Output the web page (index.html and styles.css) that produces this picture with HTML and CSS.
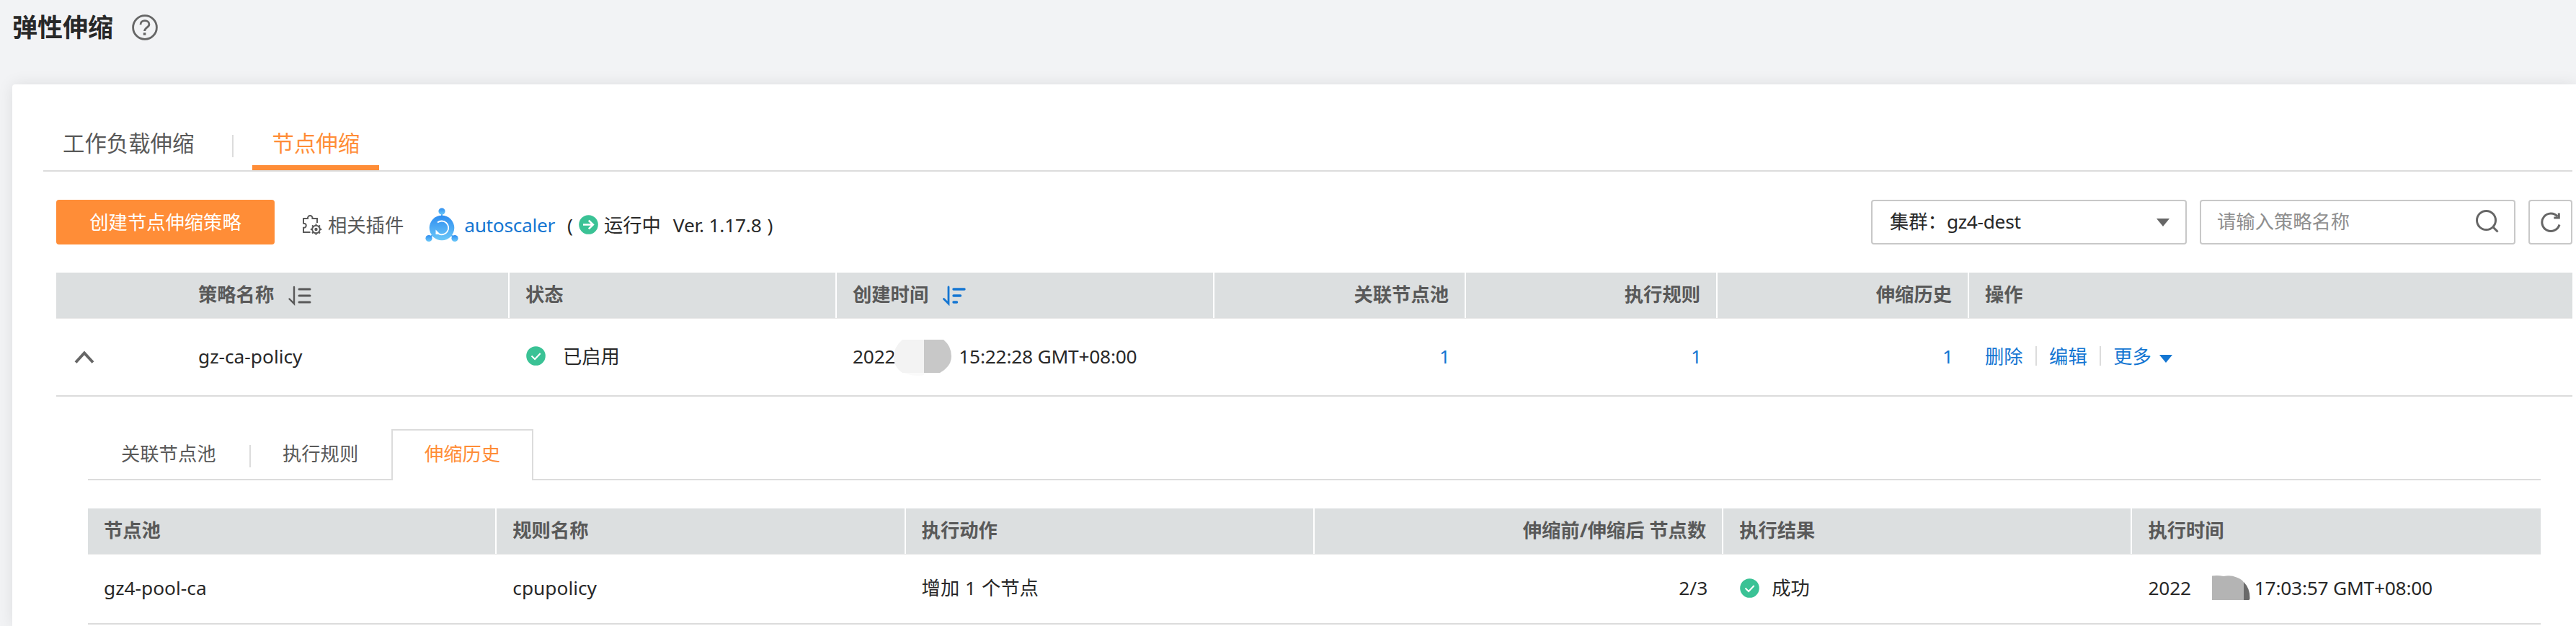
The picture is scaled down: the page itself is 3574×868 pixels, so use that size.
FILE: index.html
```html
<!DOCTYPE html>
<html lang="zh-CN">
<head>
  <meta charset="UTF-8" />
  <meta name="viewport" content="width=device-width, initial-scale=1.0"/>
  <title>弹性伸缩</title>
  <link rel="stylesheet" href="styles.css">
</head>
<body>

  <header class="page-header">
    <h1>弹性伸缩</h1>
    <svg class="help-icon" width="36" height="36" viewBox="0 0 36 36" fill="none" stroke="#666" stroke-width="2.8">
      <circle cx="18" cy="18" r="16.4"/>
      <path d="M12 14.2c0-3.6 2.6-5.6 6-5.6s5.9 2 5.9 5.1c0 4.6-6.3 4.4-6.3 9.4"/>
      <path d="M17.6 25.4v3.4" stroke-width="3.6"/>
    </svg>
  </header>

  <main class="card">
    <nav class="tabs">
      <a class="tab tab-first">工作负载伸缩</a>
      <span class="tab-sep"></span>
      <a class="tab active">节点伸缩</a>
    </nav>

    <div class="toolbar">
      <button class="btn-create">创建节点伸缩策略</button>
      <div class="plugin">
        <svg class="plugin-icon" width="28" height="28" viewBox="0 0 28 28" fill="none" stroke="#595959" stroke-width="2">
          <path d="M11.500 24H2v-6.200c5 .4 5-6.500 0-6.100V5h6c-.8-5.200 7.300-5.200 6.500 0H21v6"/>
          <circle cx="19.500" cy="20" r="5.300"/>
          <circle cx="19.500" cy="20" r="1.200"/>
          <path d="M19.500 12.200v2.500M19.500 25.300v2.500M11.800 20h2.400M24.800 20h2.500M14 14.500l1.700 1.700M23.300 23.800l1.700 1.700M25 14.500l-1.700 1.700M15.700 23.800l-1.700 1.700"/>
        </svg>
        <span class="plugin-label">相关插件</span>
        <svg class="scaler-icon" width="46" height="48" viewBox="0 0 46 48">
          <defs>
            <linearGradient id="blue" x1="0" y1="0" x2="0" y2="1">
              <stop offset="0" stop-color="#2e8df0"/>
              <stop offset="1" stop-color="#6cc8f8"/>
            </linearGradient>
          </defs>
          <path d="M23 5v10M5 42l10-8M41 42l-10-8" stroke="#4fa9f5" stroke-width="2"/>
          <circle cx="23" cy="28" r="17.300" fill="url(#blue)"/>
          <circle cx="23" cy="5" r="4.600" fill="url(#blue)"/>
          <circle cx="5" cy="42.500" r="4.600" fill="url(#blue)"/>
          <circle cx="41" cy="42.500" r="4.600" fill="url(#blue)"/>
          <path d="M17 20.500a9.400 9.400 0 1 1 2 16" fill="none" stroke="#fff" stroke-width="1.800"/>
          <path d="M14.500 30.500v6.500h6.500z" fill="#fff"/>
        </svg>
        <a class="link plugin-name">autoscaler</a>
        <span class="paren-open">(</span>
        <svg class="run-icon" width="27" height="27" viewBox="0 0 27 27" fill="none" stroke="#fff" stroke-width="2.6">
          <circle cx="13.500" cy="13.500" r="13.300" fill="#3ac295" stroke="none"/>
          <path d="M6 13.500h13.500M13.800 7.600l6 5.900-6 5.900"/>
        </svg>
        <span class="plugin-status">运行中</span>
        <span class="plugin-ver">Ver. 1.17.8</span>
        <span class="paren-close">)</span>
      </div>
      <div class="filters">
        <div class="field cluster">
          <span class="cluster-label">集群：</span>
          <span class="cluster-name">gz4-dest</span>
          <svg class="caret" width="18" height="11" viewBox="0 0 18 11"><path d="M0 0h18l-9 11z" fill="#666"/></svg>
        </div>
        <div class="field search">
          <span class="placeholder">请输入策略名称</span>
          <svg width="34" height="34" viewBox="0 0 34 34" fill="none" stroke="#666" stroke-width="3">
            <circle cx="15.500" cy="15.500" r="13"/>
            <path d="M24.500 24.500l7 7"/>
          </svg>
        </div>
        <div class="field refresh">
          <svg width="30" height="30" viewBox="0 0 30 30" fill="none" stroke="#666" stroke-width="3">
            <path d="M27 18.500A12.300 12.300 0 1 1 24.500 7.200"/>
            <path d="M26.300 2.500v6.600h-7"/>
          </svg>
        </div>
      </div>
    </div>

    <section class="grid policies">
      <div class="row head">
        <div class="cell"></div>
        <div class="cell name-cell">策略名称
          <svg class="sort" width="32" height="28" viewBox="0 0 32 28" fill="none" stroke="#595959" stroke-width="3" stroke-linecap="round">
            <path d="M8 2v23L1.500 18.500" stroke-width="2.400"/>
            <path d="M15 5h15M15 14h15M15 23h15"/>
          </svg>
        </div>
        <div class="cell">状态</div>
        <div class="cell">创建时间
          <svg class="sort" width="32" height="28" viewBox="0 0 32 28" fill="none" stroke="#1476d2" stroke-width="3.400" stroke-linecap="round">
            <path d="M8 2v23L1.500 18.500" stroke-width="2.800"/>
            <path d="M15 5h15M15 14h9.500M15 23h4.500"/>
          </svg>
        </div>
        <div class="cell num">关联节点池</div>
        <div class="cell num">执行规则</div>
        <div class="cell num">伸缩历史</div>
        <div class="cell">操作</div>
      </div>
      <div class="row">
        <div class="cell">
          <svg class="chevron" width="28" height="18" viewBox="0 0 28 18" fill="none" stroke="#666" stroke-width="4"><path d="M2 16.500L14 3.500l12 13"/></svg>
        </div>
        <div class="cell name-cell">gz-ca-policy</div>
        <div class="cell">
          <svg class="ok" width="27" height="27" viewBox="0 0 27 27"><circle cx="13.500" cy="13.500" r="13.300" fill="#3ac295"/><path d="M7.500 13.500l4.600 4.500 7.600-8" fill="none" stroke="#fff" stroke-width="2"/></svg>
          已启用
        </div>
        <div class="cell date">2022
          <svg class="mask mask-a" width="80" height="50" viewBox="0 0 80 50">
            <path d="M14 46h28v3q-14 3-28-3z" fill="#fafafa"/>
            <path d="M12 0h30v46H12Q0 38 0 24T12 0z" fill="#f3f3f3"/>
            <path d="M42 0h27q11 9 11 23T64 46H42z" fill="#c8c8c8"/>
          </svg>
          15:22:28 GMT+08:00
        </div>
        <div class="cell num"><a class="link">1</a></div>
        <div class="cell num"><a class="link">1</a></div>
        <div class="cell num"><a class="link">1</a></div>
        <div class="cell">
          <a class="link">删除</a>
          <span class="op-sep"></span>
          <a class="link">编辑</a>
          <span class="op-sep"></span>
          <a class="link">更多</a>
          <svg class="more" width="18" height="11" viewBox="0 0 18 11"><path d="M0 0h18l-9 11z" fill="#1476d2"/></svg>
        </div>
      </div>
    </section>

    <!-- expanded detail of the policy row -->
    <section class="detail">
      <nav class="subtabs">
        <a class="subtab subtab-pool">关联节点池</a>
        <span class="subtab-sep"></span>
        <a class="subtab subtab-rule">执行规则</a>
        <a class="subtab active">伸缩历史</a>
        <span class="subtab-rest"></span>
      </nav>

      <div class="grid history">
        <div class="row head">
          <div class="cell">节点池</div>
          <div class="cell">规则名称</div>
          <div class="cell">执行动作</div>
          <div class="cell num">伸缩前/伸缩后 节点数</div>
          <div class="cell">执行结果</div>
          <div class="cell">执行时间</div>
        </div>
        <div class="row">
          <div class="cell">gz4-pool-ca</div>
          <div class="cell">cpupolicy</div>
          <div class="cell action">增加 1 个节点</div>
          <div class="cell num">2/3</div>
          <div class="cell">
            <svg class="ok ok-sm" width="27" height="27" viewBox="0 0 27 27"><circle cx="13.500" cy="13.500" r="13.300" fill="#3ac295"/><path d="M7.500 13.500l4.600 4.500 7.600-8" fill="none" stroke="#fff" stroke-width="2"/></svg>
            成功
          </div>
          <div class="cell date">2022
            <svg class="mask mask-b" width="53" height="34" viewBox="0 0 53 34">
              <path d="M0 .5Q8-.5 16 1q10-2 18 1.500 8 3 10 7V34H0z" fill="#b4b4b4"/>
              <path d="M44 9q9 9 8.500 23l-1 2H44z" fill="#6a6a6a"/>
            </svg>
            17:03:57 GMT+08:00
          </div>
        </div>
      </div>
    </section>
  </main>

</body>
</html>
```

FILE: styles.css
```css
* {
  box-sizing: border-box;
}

body {
  margin: 0;
  height: 868px;
  overflow: hidden;
  background: #f2f3f5;
  color: #282828;
  font-family: "Noto Sans", "Noto Sans CJK SC", sans-serif;
  font-size: 26.3px;
  line-height: 40px;
}

svg {
  display: block;
  flex-shrink: 0;
}

.link {
  color: #1476d2;
}

.page-header {
  display: flex;
  align-items: flex-start;
  height: 117px;
  padding: 13px 0 0 17px;
}

.page-header h1 {
  margin: 0;
  font-size: 35px;
  line-height: 50px;
  font-weight: bold;
}

.help-icon {
  margin: 7px 0 0 26px;
}

.card {
  height: 751px;
  margin-left: 17px;
  padding: 0 5px 0 43px;
  background: #fff;
  border-radius: 4px 0 0 0;
  box-shadow: 0 0 22px rgba(0, 0, 0, 0.09);
}

/* main tabs */
.tabs {
  display: flex;
  align-items: flex-end;
  height: 121px;
  border-bottom: 2px solid #dcdcdc;
}

.tab {
  font-size: 30.4px;
  color: #595959;
  padding-bottom: 10px;
  border-bottom: 7px solid transparent;
}

.tab-first {
  margin-left: 27px;
}

.tab-sep {
  width: 2px;
  height: 31px;
  margin: 0 26px 18px 53px;
  background: #dcdcdc;
}

.tab.active {
  width: 176px;
  text-align: center;
  color: #ff8d37;
  border-bottom-color: #ff8d37;
}

/* toolbar */
.toolbar {
  display: flex;
  align-items: center;
  height: 62px;
  margin: 39px 0 39px 18px;
}

.btn-create {
  width: 303px;
  height: 62px;
  padding: 0 0 3px;
  border: none;
  border-radius: 4px;
  background: #ff8d37;
  color: #fff;
  font-family: inherit;
  font-size: 26.3px;
}

.plugin {
  display: flex;
  align-items: center;
  height: 62px;
  padding-top: 7px;
  margin-left: 38px;
}

.plugin-label {
  margin-left: 8px;
  color: #595959;
}

.scaler-icon {
  margin-left: 30px;
}

.plugin-name {
  margin-left: 8px;
  letter-spacing: -0.3px;
}

.paren-open {
  margin-left: 17px;
}

.run-icon {
  margin-left: 8px;
}

.plugin-status {
  margin-left: 8px;
}

.plugin-ver {
  margin-left: 17px;
  letter-spacing: -0.2px;
}

.paren-close {
  margin-left: 8px;
}

.filters {
  display: flex;
  gap: 18px;
  margin-left: auto;
}

.field {
  display: flex;
  align-items: center;
  height: 62px;
  border: 2px solid #c8c8c8;
  border-radius: 4px;
  background: #fff;
}

.cluster {
  width: 438px;
  padding: 0 22px 2px 24px;
}

.cluster-name {
  letter-spacing: -0.3px;
}

.caret {
  margin: 2px 0 0 auto;
}

.search {
  width: 438px;
  padding: 0 20px 2px 22px;
  justify-content: space-between;
}

.placeholder {
  color: #8f8f8f;
}

.refresh {
  width: 61px;
  padding-left: 14px;
}

/* tables */
.row {
  display: grid;
  border-bottom: 2px solid #dcdcdc;
}

.policies {
  margin-left: 18px;
}

.policies .row {
  height: 108px;
  grid-template-columns: 175px 454px 454px 524px 349px 349px 349px 1fr;
}

.history .row {
  height: 97px;
  grid-template-columns: repeat(5, 567.3px) 1fr;
}

.policies .head,
.history .head {
  height: 64px;
  border-bottom: 1px solid #e8e8e8;
  background: #dcdfe0;
  color: #595959;
  font-weight: bold;
}

.cell {
  display: flex;
  align-items: center;
  padding: 0 22px 3px;
  white-space: nowrap;
}

.head .cell {
  border-right: 2px solid #fff;
}

.head .cell:last-child,
.policies .head .cell:first-child {
  border-right: none;
}

.num {
  justify-content: flex-end;
}

.date {
  letter-spacing: -0.22px;
}

/* keeps the wider gaps around the count */
.action {
  word-spacing: 1px;
}

.sort {
  margin: 3px 0 0 20px;
}

.chevron {
  margin: 3px 0 0 3px;
}

.ok {
  margin-left: 1px;
  margin-right: 24px;
}

.ok-sm {
  margin-right: 17px;
}

.mask-a {
  margin: 5px 10px 0 -2px;
}

.mask-b {
  margin: -1px 6px 0 29px;
}

.op-sep {
  width: 2px;
  height: 27px;
  margin: 0 17.5px 0 17px;
  background: #dcdcdc;
}

.more {
  margin: 7px 0 0 11px;
}

/* history panel */
.detail {
  margin: 45px 44px 0 62px;
}

.subtabs {
  display: flex;
  height: 71px;
  margin-bottom: 39px;
  color: #595959;
}

.subtab,
.subtab-rest {
  height: 71px;
  padding-top: 14px;
  border-bottom: 2px solid #dcdcdc;
}

.subtab-pool {
  width: 224px;
  padding-left: 46px;
}

/* short divider that keeps the baseline rule under it */
.subtab-sep {
  width: 2px;
  border-bottom: 2px solid #dcdcdc;
  background: linear-gradient(#dcdcdc, #dcdcdc) no-repeat 0 22px / 2px 31px;
}

.subtab-rule {
  width: 195px;
  padding-left: 44px;
}

.subtab.active {
  width: 197px;
  padding-top: 12px;
  text-align: center;
  color: #ff8d37;
  border: 2px solid #dcdcdc;
  border-bottom: none;
}

.subtab-rest {
  flex: 1;
}
```
